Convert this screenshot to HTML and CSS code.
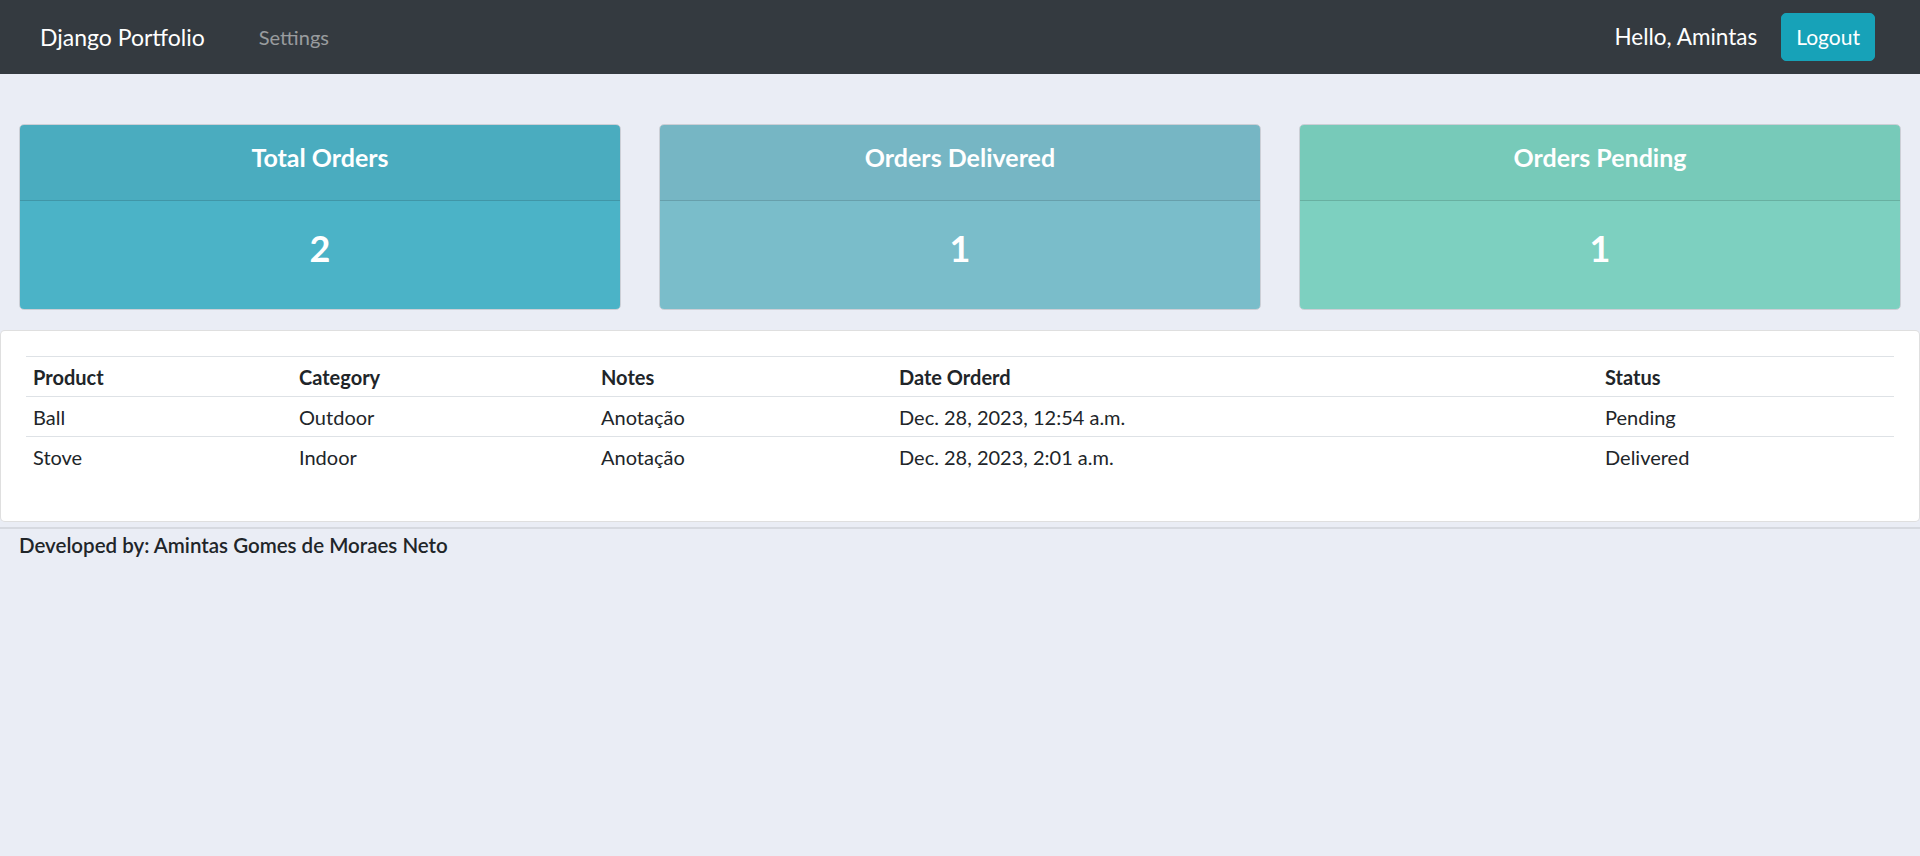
FILE: index.html
```html
<!DOCTYPE html>
<html lang="en">
<head>
<meta charset="utf-8">
<title>Django Portfolio</title>
<link rel="stylesheet" href="styles.css">
</head>
<body>
<nav class="navbar">
  <a class="brand" href="#">Django Portfolio</a>
  <a class="nav-link" href="#">Settings</a>
  <div class="nav-spacer"></div>
  <span class="hello">Hello, Amintas</span>
  <a class="btn-logout" href="#">Logout</a>
</nav>

<div class="stats">
  <div class="col">
    <div class="card card-total">
      <div class="card-header"><h5 class="card-title">Total Orders</h5></div>
      <div class="card-body"><h3 class="card-number">2</h3></div>
    </div>
  </div>
  <div class="col">
    <div class="card card-delivered">
      <div class="card-header"><h5 class="card-title">Orders Delivered</h5></div>
      <div class="card-body"><h3 class="card-number">1</h3></div>
    </div>
  </div>
  <div class="col">
    <div class="card card-pending">
      <div class="card-header"><h5 class="card-title">Orders Pending</h5></div>
      <div class="card-body"><h3 class="card-number">1</h3></div>
    </div>
  </div>
</div>

<div class="table-card">
  <table class="orders">
    <colgroup>
      <col class="c-product"><col class="c-category"><col class="c-notes"><col class="c-date"><col class="c-status">
    </colgroup>
    <thead>
      <tr><th>Product</th><th>Category</th><th>Notes</th><th>Date Orderd</th><th>Status</th></tr>
    </thead>
    <tbody>
      <tr><td>Ball</td><td>Outdoor</td><td>Anotação</td><td>Dec. 28, 2023, 12:54 a.m.</td><td>Pending</td></tr>
      <tr><td>Stove</td><td>Indoor</td><td>Anotação</td><td>Dec. 28, 2023, 2:01 a.m.</td><td>Delivered</td></tr>
    </tbody>
  </table>
</div>

<footer class="footer">Developed by: Amintas Gomes de Moraes Neto</footer>
</body>
</html>
```

FILE: styles.css
```css
* { box-sizing: border-box; }

html, body {
  margin: 0;
  padding: 0;
}

body {
  background: #eaedf5;
  color: #212529;
  font-family: "Lato", "Open Sans", "Liberation Sans", sans-serif;
  font-size: 20px;
  line-height: 1.5;
  min-height: 856px;
}

a { text-decoration: none; }

/* Navbar */
.navbar {
  display: flex;
  align-items: center;
  height: 74px;
  background: #343a40;
  padding: 0 45px 0 40px;
}

.brand {
  color: #fff;
  font-size: 23px;
  line-height: 1;
  margin-right: 54px;
}

.nav-link {
  color: rgba(255, 255, 255, 0.5);
  font-size: 20px;
}

.nav-spacer { flex: 1; }

.hello {
  color: #fff;
  font-size: 22.5px;
  margin-right: 24px;
}

.btn-logout {
  display: inline-block;
  background: #17a2b8;
  color: #fff;
  font-size: 21px;
  line-height: 30px;
  padding: 8px 14px;
  border-radius: 5px;
  border: 1px solid #17a2b8;
}

/* Stat cards */
.stats {
  display: grid;
  grid-template-columns: repeat(3, 1fr);
  margin-top: 50px;
}

.col { padding: 0 19px; }

.card {
  border: 1px solid rgba(0, 0, 0, 0.125);
  border-radius: 5px;
  overflow: hidden;
  color: #fff;
}

.card-header {
  height: 76px;
  display: flex;
  align-items: center;
  justify-content: center;
  border-bottom: 1px solid rgba(0, 0, 0, 0.125);
}

.card-title {
  margin: 0 0 12px;
  font-size: 25px;
  font-weight: 700;
  line-height: 1.2;
}

.card-body {
  height: 108px;
  display: flex;
  align-items: center;
  justify-content: center;
}

.card-number {
  margin: 0 0 12px;
  font-size: 36px;
  font-weight: 700;
  line-height: 1.2;
}

.card-total .card-header { background: #4aacbf; }
.card-total .card-body { background: #4bb3c7; }
.card-delivered .card-header { background: #76b6c4; }
.card-delivered .card-body { background: #7abdca; }
.card-pending .card-header { background: #77cab9; }
.card-pending .card-body { background: #7dd0c0; }

/* Orders table */
.table-card {
  margin-top: 20px;
  background: #fff;
  border: 1px solid rgba(0, 0, 0, 0.125);
  border-radius: 5px;
  padding: 25px 25px 44px;
  width: 1920px;
}

.orders {
  width: 100%;
  border-collapse: collapse;
  table-layout: fixed;
}

.c-product { width: 266px; }
.c-category { width: 302px; }
.c-notes { width: 298px; }
.c-date { width: 706px; }

.orders th,
.orders td {
  text-align: left;
  padding: 5px 7px 4px;
  height: 40px;
  border-top: 1px solid #dee2e6;
  font-size: 20px;
  line-height: 30px;
}

.orders th { font-weight: 700; }

/* Footer */
.footer {
  margin-top: 5px;
  border-top: 2px solid #d6d9e0;
  padding: 1px 19px 0;
  font-size: 20.5px;
  font-weight: 600;
  line-height: 30px;
}
```
